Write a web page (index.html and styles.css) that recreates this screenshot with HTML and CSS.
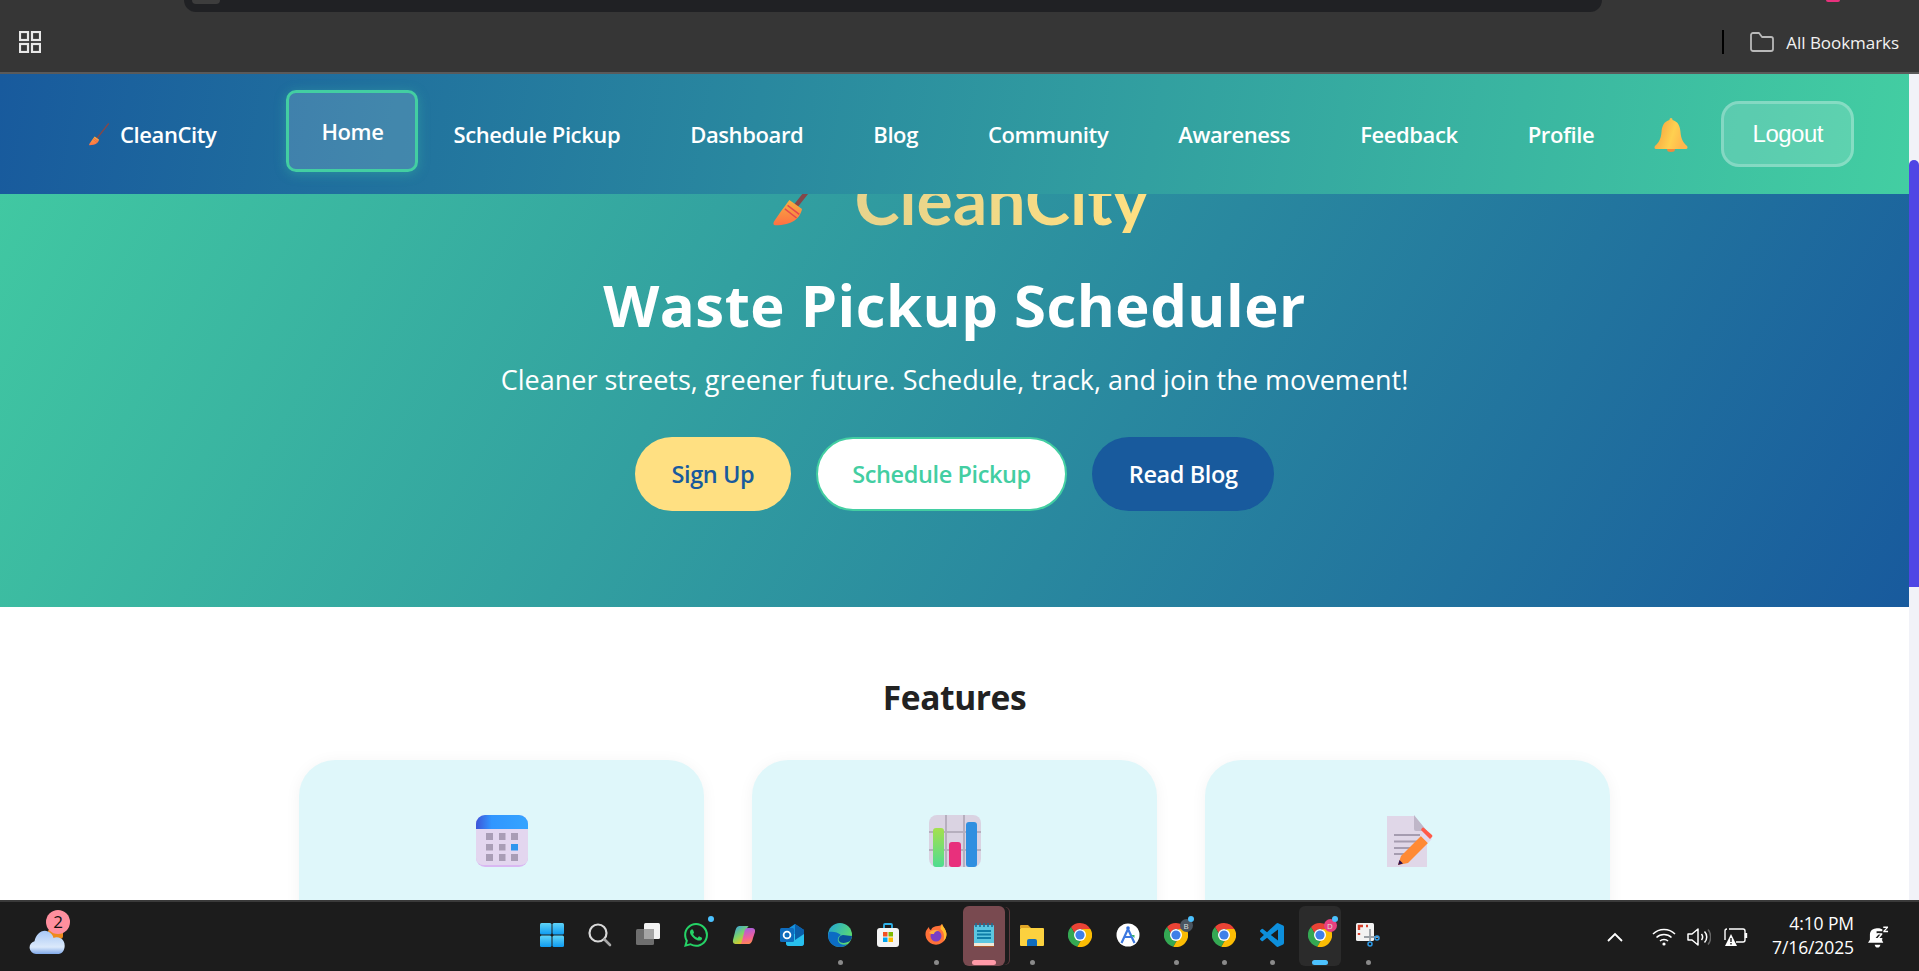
FILE: index.html
```html
<!DOCTYPE html>
<html lang="en">
  <head>
    <meta charset="UTF-8" />
    <meta name="viewport" content="width=device-width, initial-scale=1.0" />
    <title>CleanCity</title>
    <link rel="stylesheet" href="styles.css">
  </head>
  <body>
    <svg class="defs" width="0" height="0">
      <defs>
        <linearGradient id="bellFill" x1="0" y1="0" x2="1" y2="0.3">
          <stop offset="0" stop-color="#f59a3c" />
          <stop offset="0.65" stop-color="#ffd050" />
          <stop offset="1" stop-color="#ffb74d" />
        </linearGradient>
        <linearGradient id="broomHead" x1="0" y1="0" x2="0" y2="1">
          <stop offset="0" stop-color="#f5b041" />
          <stop offset="1" stop-color="#ff7043" />
        </linearGradient>
        <linearGradient id="winFill" x1="0" y1="0" x2="0" y2="1">
          <stop offset="0" stop-color="#5fd4f8" />
          <stop offset="1" stop-color="#0f9bf0" />
        </linearGradient>
        <symbol id="broom" viewBox="0 0 32 36">
          <path d="M31 1 L12 25" stroke="#84474a" stroke-width="2.500" stroke-linecap="round" />
          <path d="M9 21 L16 26 C15 31 11 35 1 35 C0 35 0 34 .5 33 C3 29 6 25 9 21 Z" fill="url(#broomHead)" />
          <path d="M8 24 L14.500 29M6.500 26 L13 31" stroke="#e5484d" stroke-width="0.800" />
        </symbol>
        <symbol id="chrome" viewBox="0 0 24 24">
          <path d="M12 0a12 12 0 0 1 10.400 6H12a6 6 0 0 0-5.600 3.800L3 3.900A12 12 0 0 1 12 0z" fill="#ea4335" />
          <path d="M3 3.900l5 8.700a6 6 0 0 0 4.600 5.400l-3.300 5.700A12 12 0 0 1 3 3.900z" fill="#34a853" />
          <path d="M22.400 6A12 12 0 0 1 9.300 23.700l5.200-9a6 6 0 0 0-.5-8.700z" fill="#fbbc04" />
          <circle cx="12" cy="12" r="6" fill="#fff" />
          <circle cx="12" cy="12" r="4.600" fill="#3f7fe8" />
        </symbol>
      </defs>
    </svg>

    <div class="browser-bar">
      <div class="omnibar"><span class="omnibar-dot"></span></div>
      <span class="profile-dot"></span>
      <div class="bookmarks-row">
        <svg class="apps-icon" viewBox="0 0 22 22" fill="none" stroke="#e8e8e8" stroke-width="2.200">
          <rect x="1" y="1" width="8" height="8" />
          <rect x="13" y="1" width="8" height="8" />
          <rect x="1" y="13" width="8" height="8" />
          <rect x="13" y="13" width="8" height="8" />
        </svg>
        <div class="all-bookmarks">
          <span class="bookmarks-divider"></span>
          <svg class="folder-icon" viewBox="0 0 24 20" fill="none" stroke="#b9b9b9" stroke-width="1.800">
            <path d="M1 3a2 2 0 0 1 2-2h6l3 4h9a2 2 0 0 1 2 2v10a2 2 0 0 1-2 2H3a2 2 0 0 1-2-2z" stroke-linejoin="round" />
          </svg>
          <span>All Bookmarks</span>
        </div>
      </div>
    </div>

    <div class="viewport">
      <div class="page-area">
        <nav class="navbar">
          <a class="brand">
            <svg class="brand-icon"><use href="#broom" /></svg>
            <span>CleanCity</span>
          </a>
          <a class="nav-link active">Home</a>
          <a class="nav-link">Schedule Pickup</a>
          <a class="nav-link">Dashboard</a>
          <a class="nav-link">Blog</a>
          <a class="nav-link">Community</a>
          <a class="nav-link">Awareness</a>
          <a class="nav-link">Feedback</a>
          <a class="nav-link">Profile</a>
          <svg class="bell-icon" viewBox="0 0 34 34">
            <ellipse cx="17" cy="31.500" rx="4" ry="2.500" fill="#f08a3c" />
            <path d="M17 0c1 0 1.500.8 1.500 2C24 3.500 26 8 26.500 14c.5 6 2 10 6.500 14 1 1.500.5 3-1 3H2c-1.500 0-2-1.500-1-3 4.500-4 6-8 6.500-14C8 8 10 3.500 15.500 2 15.500.8 16 0 17 0z" fill="url(#bellFill)" />
          </svg>
          <button class="logout-btn">Logout</button>
        </nav>

        <main class="page">
          <section class="hero">
            <div class="hero-logo">
              <svg class="hero-broom"><use href="#broom" /></svg>
              <span class="hero-logo-text">CleanCity</span>
            </div>
            <h1>Waste Pickup Scheduler</h1>
            <p class="hero-sub">Cleaner streets, greener future. Schedule, track, and join the movement!</p>
            <div class="hero-actions">
              <a class="btn btn-yellow">Sign Up</a>
              <a class="btn btn-white">Schedule Pickup</a>
              <a class="btn btn-blue">Read Blog</a>
            </div>
          </section>

          <section class="features">
            <h2>Features</h2>
            <div class="feature-grid">
              <div class="feature-card">
                <svg class="feature-icon" viewBox="0 0 52 52">
                  <defs>
                    <linearGradient id="calTop" x1="0" y1="0" x2="1" y2="0">
                      <stop offset="0" stop-color="#3d55d8" />
                      <stop offset="0.3" stop-color="#3196ff" />
                      <stop offset="1" stop-color="#35a4ff" />
                    </linearGradient>
                  </defs>
                  <rect width="52" height="52" rx="9" fill="#d9b8f2" />
                  <path d="M0 12h52v31a7 7 0 0 1-7 7H7a7 7 0 0 1-7-7z" fill="#e3d6ef" />
                  <path d="M0 14V9a9 9 0 0 1 9-9h34a9 9 0 0 1 9 9v5z" fill="url(#calTop)" />
                  <g fill="#a99db6">
                    <rect x="10" y="18" width="7" height="7" /><rect x="23" y="18" width="6.500" height="7" /><rect x="35" y="18" width="7" height="7" />
                    <rect x="10" y="29" width="7" height="6.500" /><rect x="23" y="29" width="6.500" height="6.500" />
                    <rect x="10" y="39" width="7" height="7" /><rect x="23" y="39" width="6.500" height="7" /><rect x="35" y="39" width="7" height="7" />
                  </g>
                  <rect x="35" y="29" width="7" height="6.500" fill="#2f96ee" />
                </svg>
              </div>
              <div class="feature-card">
                <svg class="feature-icon" viewBox="0 0 52 52">
                  <defs>
                    <linearGradient id="barGreen" x1="0" y1="0" x2="0" y2="1"><stop offset="0" stop-color="#a5e04e" /><stop offset="1" stop-color="#4fdc90" /></linearGradient>
                  </defs>
                  <rect width="52" height="52" rx="8" fill="#dad3e2" />
                  <path d="M0 17h52M0 35h52M17 0v52M35 0v52" stroke="#b6afbe" stroke-width="2" />
                  <rect x="4" y="13" width="11" height="39" rx="3" fill="url(#barGreen)" />
                  <rect x="20" y="27" width="12" height="25" rx="3" fill="#e8307c" />
                  <rect x="37" y="7" width="11" height="45" rx="3" fill="#2f8fe0" />
                </svg>
              </div>
              <div class="feature-card">
                <svg class="feature-icon" viewBox="-5 0 52 52">
                  <path d="M0 1h27l13 15v36H0z" fill="#e0d7e8" />
                  <path d="M27 0l13 16H29a2 2 0 0 1-2-2z" fill="#bfb6c8" />
                  <path d="M7 20h26M7 26.500h26M7 33h26M7 39h14" stroke="#a59cb0" stroke-width="2" />
                  <path d="M11 50l3-9 20-20 7 7-20 20z" fill="#ff8a35" />
                  <path d="M34 21l4-4 7 7-4 4z" fill="#e2d9ec" />
                  <path d="M35 13a1.500 1.500 0 0 1 2 0l8 7a1.500 1.500 0 0 1 0 2l-2 2-9-9z" fill="#ff5a48" />
                  <path d="M11 50l1.500-5 3.500 3.500z" fill="#2a1050" />
                </svg>
              </div>
            </div>
          </section>
        </main>
      </div>
      <div class="scrollbar"><div class="scrollbar-thumb"></div></div>
    </div>

    <footer class="taskbar">
      <div class="weather">
        <svg class="weather-icon" viewBox="0 0 38 28">
          <defs>
            <linearGradient id="cloudFill" x1="0" y1="0" x2="0" y2="1">
              <stop offset="0" stop-color="#a8c8f5" />
              <stop offset="0.7" stop-color="#dbe9fb" />
              <stop offset="1" stop-color="#7fa8e8" />
            </linearGradient>
          </defs>
          <rect x="19" y="2" width="15" height="10" rx="3" fill="#ee8a1c" />
          <path d="M7 27a6.500 6.500 0 0 1-1.500-12.800C7 7 13 2 19 4.500c3 1.300 5 4 5.500 6.500 3-1.500 8-.5 10 3 3 5.500 0 13-5 13z" fill="url(#cloudFill)" />
        </svg>
        <span class="weather-badge">2</span>
      </div>

      <div class="task-icons">
        <div class="task-item">
          <svg viewBox="0 0 24 24" fill="url(#winFill)">
            <rect x="0" y="0" width="11.500" height="11.500" rx="1.500" /><rect x="12.500" y="0" width="11.500" height="11.500" rx="1.500" />
            <rect x="0" y="12.500" width="11.500" height="11.500" rx="1.500" /><rect x="12.500" y="12.500" width="11.500" height="11.500" rx="1.500" />
          </svg>
        </div>
        <div class="task-item">
          <svg viewBox="0 0 24 24" fill="none" stroke-linecap="round">
            <circle cx="10" cy="10" r="8.500" stroke="#d8d8d8" stroke-width="2.200" />
            <path d="M16.500 16.500L22 22" stroke="#a8a8a8" stroke-width="2.600" />
          </svg>
        </div>
        <div class="task-item">
          <svg viewBox="0 0 24 24">
            <rect x="8" y="0" width="16" height="16" rx="1.500" fill="#f2f2f2" />
            <rect x="0" y="6" width="18" height="16" rx="1.500" fill="#6e6e6e" />
            <rect x="8" y="6" width="10" height="10" fill="#a5a5a5" />
          </svg>
        </div>
        <div class="task-item">
          <svg viewBox="0 0 24 24" fill="#25d366"><path d="M17.472 14.382c-.297-.149-1.758-.867-2.03-.967-.273-.099-.471-.148-.67.15-.197.297-.767.966-.94 1.164-.173.199-.347.223-.644.075-.297-.15-1.255-.463-2.39-1.475-.883-.788-1.48-1.761-1.653-2.059-.173-.297-.018-.458.13-.606.134-.133.298-.347.446-.52.149-.174.198-.298.298-.497.099-.198.05-.371-.025-.52-.075-.149-.669-1.612-.916-2.207-.242-.579-.487-.5-.669-.51-.173-.008-.371-.01-.57-.01-.198 0-.52.074-.792.372-.272.297-1.04 1.016-1.04 2.479 0 1.462 1.065 2.875 1.213 3.074.149.198 2.096 3.2 5.077 4.487.709.306 1.262.489 1.694.625.712.227 1.36.195 1.871.118.571-.085 1.758-.719 2.006-1.413.248-.694.248-1.289.173-1.413-.074-.124-.272-.198-.57-.347m-5.421 7.403h-.004a9.87 9.87 0 01-5.031-1.378l-.361-.214-3.741.982.998-3.648-.235-.374a9.86 9.86 0 01-1.51-5.26c.001-5.45 4.436-9.884 9.888-9.884 2.64 0 5.122 1.03 6.988 2.898a9.825 9.825 0 012.893 6.994c-.003 5.45-4.437 9.884-9.885 9.884m8.413-18.297A11.815 11.815 0 0012.05 0C5.495 0 .16 5.335.157 11.892c0 2.096.547 4.142 1.588 5.945L.057 24l6.305-1.654a11.882 11.882 0 005.683 1.448h.005c6.554 0 11.89-5.335 11.893-11.893a11.821 11.821 0 00-3.48-8.413z" /></svg>
          <span class="task-badge"></span>
        </div>
        <div class="task-item">
          <svg viewBox="0 0 24 24">
            <defs>
              <linearGradient id="copA" x1="0" y1="0" x2="0.6" y2="1"><stop offset="0" stop-color="#2f9be8" /><stop offset="0.55" stop-color="#7dd36a" /><stop offset="1" stop-color="#f5c518" /></linearGradient>
              <linearGradient id="copB" x1="0.4" y1="0" x2="0.6" y2="1"><stop offset="0" stop-color="#a65fe0" /><stop offset="0.6" stop-color="#f0609a" /><stop offset="1" stop-color="#ff8a50" /></linearGradient>
            </defs>
            <path d="M8 3c-3 0-4 2-5 6l-2 8c-.5 3 1 4 3 4h5c2 0 3-1 3.500-3L15 6c.5-2 1-3 2-3z" fill="url(#copA)" />
            <path d="M16 21c3 0 4-2 5-6l2-6c.5-3-1-4-3-4h-4c-2 0-3 1-3.500 3L10 18c-.5 2-1 3-2 3z" fill="url(#copB)" />
          </svg>
        </div>
        <div class="task-item">
          <svg viewBox="0 0 24 24">
            <path d="M6 7l9-6 9 6v13a3 3 0 0 1-3 3H9a3 3 0 0 1-3-3z" fill="#1490df" />
            <path d="M6 11h18v9a3 3 0 0 1-3 3H9a3 3 0 0 1-3-3z" fill="#28c0ee" />
            <path d="M15 1l9 6v4l-9 6z" fill="#0a5da8" />
            <rect x="0" y="5" width="14" height="14" rx="1.500" fill="#0f6cbd" />
            <circle cx="7" cy="12" r="3.400" fill="none" stroke="#fff" stroke-width="1.800" />
          </svg>
        </div>
        <div class="task-item has-dot">
          <svg viewBox="0 0 24 24">
            <defs>
              <linearGradient id="edgeA" x1="0" y1="0" x2="1" y2="0.6"><stop offset="0" stop-color="#1fa4d8" /><stop offset="1" stop-color="#5fdc6c" /></linearGradient>
            </defs>
            <circle cx="12" cy="12" r="12" fill="url(#edgeA)" />
            <path d="M1 9c-3 8 3 15 11 15 3 0 6-1 8-3-4 1.500-9 .5-10-3-.8-3 1-5 3-6-3-3-9-4-12-3z" fill="#0c6cc4" />
            <path d="M11 18c-1-3 1-5.500 4-6 3 0 5 1 9 1 0 1-1 4-2 5-3 2-9 3-11 0z" fill="#0a4f9a" />
          </svg>
          <span class="task-dot"></span>
        </div>
        <div class="task-item">
          <svg viewBox="0 0 24 24">
            <path d="M8 6V2a1 1 0 0 1 1-1h6a1 1 0 0 1 1 1v4" fill="none" stroke="#2fb3ea" stroke-width="1.800" />
            <rect x="1" y="5" width="22" height="19" rx="3" fill="#f4f4f4" />
            <rect x="7" y="9" width="4.500" height="4.500" fill="#f25022" /><rect x="12.500" y="9" width="4.500" height="4.500" fill="#7fba00" />
            <rect x="7" y="14.500" width="4.500" height="4.500" fill="#00a4ef" /><rect x="12.500" y="14.500" width="4.500" height="4.500" fill="#ffb900" />
          </svg>
        </div>
        <div class="task-item has-dot">
          <svg viewBox="0 0 24 24">
            <path d="M18 1c1 3 4 5 4.500 10A10.500 10.500 0 1 1 2 8c1-2 2-3 3-4 0 2 1 3 2 3 1-3 4-4 7-4 2 0 3-1 4-2z" fill="#ff7139" />
            <path d="M18 1c1 3 4 5 4.500 10 0 3-1 5-3 7 1-4 1-9-3-12 0-2 1-4 1.500-5z" fill="#ffbd2e" />
            <circle cx="12" cy="13" r="5.500" fill="#7b3fc4" />
            <path d="M5 10c2-3 7-4 10-2-3-.5-5 1-5 3-2 0-3 0-5-1z" fill="#ffb040" />
          </svg>
          <span class="task-dot"></span>
        </div>
        <div class="task-item notepad-item">
          <span class="notepad-bg"></span>
          <svg viewBox="0 0 24 24">
            <rect x="2" y="2" width="20" height="21" rx="1" fill="#5cc6e0" />
            <path d="M2 20h20v3H2z" fill="#f0e8d8" />
            <path d="M2 23h20v1H2z" fill="#a8552a" />
            <path d="M5 8h14M5 11.500h14M5 15h14" stroke="#0f7ea8" stroke-width="1.800" />
            <path d="M4 0v4M8 0v4M12 0v4M16 0v4M20 0v4" stroke="#1c6f96" stroke-width="1.600" />
          </svg>
          <span class="task-bar bar-pink"></span>
        </div>
        <div class="task-item has-dot">
          <svg viewBox="0 0 24 24">
            <path d="M0 3a1 1 0 0 1 1-1h7l3 3h-11z" fill="#e0a526" />
            <rect x="0" y="5" width="24" height="18" rx="1" fill="#fbd13f" />
            <path d="M7 23v-5a2 2 0 0 1 2-2h6a2 2 0 0 1 2 2v5z" fill="#0f6cbd" />
          </svg>
          <span class="task-dot"></span>
        </div>
        <div class="task-item">
          <svg viewBox="0 0 24 24"><use href="#chrome" /></svg>
        </div>
        <div class="task-item">
          <svg viewBox="0 0 24 24">
            <circle cx="12" cy="12" r="11.500" fill="#fff" />
            <circle cx="12" cy="5" r="1.800" fill="#2f6fdc" />
            <path d="M12 6L5.500 20M12 6l6.500 14M7.500 14h9" stroke="#3c78e0" stroke-width="2.200" fill="none" />
            <path d="M15 12l3.500 0 0 3z" fill="#3ab36a" />
          </svg>
        </div>
        <div class="task-item has-dot">
          <svg viewBox="0 0 24 24"><use href="#chrome" /></svg>
          <span class="chrome-avatar grey">B</span>
          <span class="task-badge"></span>
          <span class="task-dot"></span>
        </div>
        <div class="task-item has-dot">
          <svg viewBox="0 0 24 24"><use href="#chrome" /></svg>
          <span class="task-dot"></span>
        </div>
        <div class="task-item has-dot">
          <svg viewBox="0 0 24 24" fill="#0d8fdc"><path d="M23.15 2.587L18.21.21a1.494 1.494 0 0 0-1.705.29l-9.46 8.63-4.12-3.128a.999.999 0 0 0-1.276.057L.327 7.261A1 1 0 0 0 .326 8.74L3.899 12 .326 15.26a1 1 0 0 0 .001 1.479L1.65 17.94a.999.999 0 0 0 1.276.057l4.12-3.128 9.46 8.63a1.492 1.492 0 0 0 1.704.29l4.942-2.377A1.5 1.5 0 0 0 24 20.06V3.939a1.5 1.5 0 0 0-.85-1.352zm-5.146 14.861L10.826 12l7.178-5.448v10.896z" /></svg>
          <span class="task-dot"></span>
        </div>
        <div class="task-item active-item">
          <svg viewBox="0 0 24 24"><use href="#chrome" /></svg>
          <span class="chrome-avatar pink">D</span>
          <span class="task-badge"></span>
          <span class="task-bar bar-blue"></span>
        </div>
        <div class="task-item has-dot">
          <svg viewBox="0 0 24 24">
            <rect x="0" y="0" width="18" height="18" rx="1.500" fill="#f2f2f2" />
            <path d="M3 7V3h4M10 3h2M3 10v2" stroke="#d8402c" stroke-width="2.400" fill="none" />
            <path d="M14 6v12M8 14h14" stroke="#9aa0a6" stroke-width="1.800" />
            <circle cx="14" cy="21" r="2" fill="none" stroke="#2f9be8" stroke-width="1.500" />
            <circle cx="21" cy="15" r="2" fill="none" stroke="#2f9be8" stroke-width="1.500" />
          </svg>
          <span class="task-dot"></span>
        </div>
      </div>

      <div class="tray">
        <svg class="tray-chevron" viewBox="0 0 16 10" fill="none" stroke="#fff" stroke-width="1.800"><path d="M1 9l7-7 7 7" /></svg>
        <svg class="tray-wifi" viewBox="0 0 24 18" fill="none" stroke="#fff" stroke-width="1.500">
          <path d="M1 6c6-6 16-6 22 0M4.500 9.500c4-4 11-4 15 0M8 13c2-2 6-2 8 0" />
          <circle cx="12" cy="16" r="1.600" fill="#fff" stroke="none" />
        </svg>
        <svg class="tray-volume" viewBox="0 0 24 18" fill="none" stroke="#fff" stroke-width="1.500">
          <path d="M1 6h4l6-5v16l-6-5H1z" stroke-linejoin="round" />
          <path d="M14.500 6c1.500 2 1.500 4 0 6M17.500 3.500c3 3 3 8 0 11" />
          <path d="M21 1.500c3.500 4 3.500 11 0 15" stroke="#666" />
        </svg>
        <svg class="tray-battery" viewBox="0 0 24 20" fill="none" stroke="#fff" stroke-width="1.400">
          <path d="M5 2h14a2 2 0 0 1 2 2v9a2 2 0 0 1-2 2H12" />
          <path d="M1 13V4a2 2 0 0 1 2-2" />
          <path d="M22 6v5" stroke-width="2.400" />
          <path d="M7 7L1 19h12z" fill="#fff" stroke="none" />
          <path d="M7 11v4M7 16v1.500" stroke="#1c1c1c" stroke-width="1.400" />
        </svg>
        <div class="clock">
          <span>4:10 PM</span>
          <span>7/16/2025</span>
        </div>
        <svg class="tray-bell" viewBox="0 0 22 24" fill="#fff">
          <path d="M8 3c-4 .5-6 3-6 7v5l-2 3h16l-1.500-3v-2H8l4-5H9V6h6V4c-2-1-4-1.500-7-1z" />
          <path d="M7 20h6c-.5 2-1.500 3-3 3s-2.500-1-3-3z" />
          <path d="M10 8h5v1.400l-3 3.600h3v1.500H10v-1.500l3-3.600h-3zM16 1h5v1.300l-3 3.200h3V7h-5V5.700l3-3.200h-3z" />
        </svg>
      </div>
    </footer>
  </body>
</html>
```

FILE: styles.css
```css
html {
  font-family: "Open Sans", "Noto Sans", sans-serif;
}

body {
  margin: 0;
  height: 100vh;
  overflow: hidden;
  display: flex;
  flex-direction: column;
  background: #fff;
}

a {
  color: inherit;
  text-decoration: none;
}

.defs {
  position: absolute;
}

/* browser chrome */
.browser-bar {
  height: 72px;
  flex-shrink: 0;
  position: relative;
  background: #363636;
  border-bottom: 2px solid #5a5a5a;
}

.omnibar {
  height: 12px;
  margin: 0 317px 0 184px;
  background: #202124;
  border-radius: 0 0 20px 20px;
  padding-left: 8px;
}

.omnibar-dot {
  display: block;
  width: 28px;
  height: 4px;
  background: #3d3d3d;
  border-radius: 0 0 14px 14px;
}

.profile-dot {
  position: absolute;
  top: 0;
  left: 1826px;
  width: 14px;
  height: 2px;
  background: #e8317d;
  border-radius: 0 0 8px 8px;
}

.bookmarks-row {
  height: 60px;
  display: flex;
  align-items: center;
  justify-content: space-between;
  padding: 0 20px 0 19px;
}

.apps-icon {
  width: 22px;
  height: 22px;
}

.all-bookmarks {
  display: flex;
  align-items: center;
  color: #f2f2f2;
  font-size: 17px;
  letter-spacing: -0.05px;
}

.bookmarks-divider {
  width: 2px;
  height: 24px;
  background: #000;
  margin-right: 26px;
}

.folder-icon {
  width: 24px;
  height: 20px;
  margin-right: 12px;
}

/* page */
.viewport {
  height: 826px;
  flex-shrink: 0;
  display: flex;
  overflow: hidden;
}

.page-area {
  flex: 1;
  position: relative;
  overflow: hidden;
}

.scrollbar {
  width: 10px;
  background: #f1f2f8;
}

.scrollbar-thumb {
  margin-top: 86px;
  height: 427px;
  background: #4f46e5;
  border-radius: 5px 5px 0 0;
}

.navbar {
  position: absolute;
  top: 0;
  left: 0;
  right: 0;
  z-index: 10;
  height: 120px;
  box-sizing: border-box;
  padding: 2px 0 0 89px;
  display: flex;
  align-items: center;
  background: linear-gradient(100deg, #185a9d, #43cea2);
  color: #fff;
  font-weight: 600;
  font-size: 22px;
  letter-spacing: -0.4px;
}

.brand {
  display: flex;
  align-items: center;
  gap: 11px;
  margin-right: 70px;
  padding-bottom: 2px;
}

.brand-icon {
  width: 20px;
  height: 23px;
}

.nav-link {
  padding: 0 32px 2px;
  border: 3px solid transparent;
}

.nav-link.active {
  display: flex;
  align-items: center;
  height: 76px;
  padding: 0 32px;
  transform: translateY(-4px);
  border-color: #43cea2;
  border-radius: 10px;
  background: rgba(255, 255, 255, 0.15);
  box-shadow: 0 2px 12px rgba(67, 206, 162, 0.35);
}

.bell-icon {
  width: 34px;
  height: 34px;
  margin: 0 33px 0 25px;
}

.logout-btn {
  width: 133px;
  height: 66px;
  margin-top: -2px;
  border: 3px solid rgba(255, 255, 255, 0.25);
  border-radius: 18px;
  background: rgba(255, 255, 255, 0.15);
  color: #fff;
  font-family: "Liberation Sans", sans-serif;
  font-size: 24px;
  letter-spacing: -0.5px;
}

.page {
  margin-top: -80px;
}

.hero {
  height: 613px;
  box-sizing: border-box;
  overflow: hidden;
  padding-top: 138px;
  text-align: center;
  color: #fff;
  background: linear-gradient(120deg, #43cea2, #185a9d);
}

.hero-logo {
  height: 101px;
  padding-left: 12px;
  display: flex;
  justify-content: center;
  align-items: flex-end;
  gap: 24px;
}

.hero-broom {
  width: 58px;
  height: 65px;
  margin-bottom: 6px;
}

.hero-logo-text {
  font-family: "Lato", sans-serif;
  font-size: 68px;
  font-weight: 700;
  line-height: 1;
  background: linear-gradient(90deg, #e6d38c, #ffe082);
  -webkit-background-clip: text;
  background-clip: text;
  color: transparent;
}

.hero h1 {
  margin: 34px 0 0;
  font-size: 58px;
  font-weight: 700;
  line-height: 76px;
  letter-spacing: 0.5px;
}

.hero-sub {
  margin: 19px 0 0;
  font-size: 27px;
  line-height: 36px;
}

.hero-actions {
  margin-top: 39px;
  display: flex;
  justify-content: center;
  gap: 25px;
}

.btn {
  height: 74px;
  box-sizing: border-box;
  display: flex;
  align-items: center;
  padding: 0 36.5px;
  border-radius: 37px;
  font-size: 23.5px;
  font-weight: 600;
  letter-spacing: -0.4px;
}

.btn-yellow {
  background: #ffe082;
  color: #185a9d;
}

.btn-white {
  padding: 0 34.5px;
  background: #fff;
  color: #43cea2;
  border: 2px solid #43cea2;
}

.btn-blue {
  background: #185a9d;
  color: #fff;
}

.features {
  padding-top: 69px;
}

.features h2 {
  margin: 0;
  text-align: center;
  font-size: 33.5px;
  line-height: 42px;
  font-weight: 700;
  color: #222;
  letter-spacing: -0.4px;
}

.feature-grid {
  margin: 42px auto 0;
  width: 1311px;
  display: grid;
  grid-template-columns: repeat(3, 1fr);
  gap: 48px;
}

.feature-card {
  height: 260px;
  padding-top: 55px;
  box-sizing: border-box;
  text-align: center;
  background: #dff7fa;
  border-radius: 36px;
  box-shadow: 0 2px 16px rgba(0, 0, 0, 0.05);
}

.feature-icon {
  height: 52px;
  width: 52px;
}

/* windows taskbar */
.taskbar {
  height: 71px;
  flex-shrink: 0;
  box-sizing: border-box;
  border-top: 2px solid #3a3a3a;
  background: #1c1c1c;
  display: grid;
  grid-template-columns: 1fr auto 1fr;
  align-items: center;
  color: #fff;
}

.weather {
  position: relative;
  width: 100px;
  height: 69px;
}

.weather-icon {
  position: absolute;
  left: 29px;
  top: 25px;
  width: 38px;
  height: 28px;
}

.weather-badge {
  position: absolute;
  left: 46px;
  top: 8px;
  width: 24px;
  height: 24px;
  border-radius: 50%;
  background: #ff8f9e;
  color: #111;
  font-size: 17px;
  line-height: 24px;
  text-align: center;
}

.task-icons {
  display: flex;
}

.task-item {
  position: relative;
  width: 48px;
  height: 69px;
  display: flex;
  align-items: center;
  justify-content: center;
}

.task-item > svg {
  position: relative;
  width: 24px;
  height: 24px;
  margin-bottom: 3px;
}

.task-badge {
  position: absolute;
  top: 14px;
  right: 6px;
  width: 6px;
  height: 6px;
  border-radius: 50%;
  background: #4cc2ff;
}

.task-dot {
  position: absolute;
  bottom: 6px;
  left: 22px;
  width: 5px;
  height: 5px;
  border-radius: 50%;
  background: #8a8a8a;
}

.task-bar {
  position: absolute;
  bottom: 6px;
  height: 5px;
  border-radius: 3px;
}

.bar-pink {
  left: 12px;
  width: 24px;
  background: #ff9aa8;
}

.bar-blue {
  left: 16px;
  width: 16px;
  background: #4cc2ff;
}

.notepad-bg {
  position: absolute;
  top: 4px;
  left: 3px;
  width: 42px;
  height: 60px;
  border-radius: 6px;
  background: #794a50;
  box-shadow: 5px 0 0 -1px #1c1c1c, 6px 0 0 -1px #5a3a3e;
}

.active-item::before {
  content: "";
  position: absolute;
  top: 4px;
  left: 3px;
  width: 42px;
  height: 60px;
  border-radius: 6px;
  background: #2b2b2b;
}

.chrome-avatar {
  position: absolute;
  top: 17px;
  left: 28px;
  width: 13px;
  height: 13px;
  border-radius: 50%;
  color: #ddd;
  font-size: 8px;
  line-height: 13px;
  text-align: center;
}

.chrome-avatar.grey {
  background: #4a5560;
}

.chrome-avatar.pink {
  background: #e8407f;
}

.tray {
  display: flex;
  align-items: center;
  justify-content: flex-end;
  height: 69px;
}

.tray-chevron {
  width: 16px;
  height: 10px;
  margin-right: 29px;
}

.tray-wifi {
  width: 24px;
  height: 18px;
  margin-right: 11px;
}

.tray-volume {
  width: 24px;
  height: 18px;
  margin-right: 13px;
}

.tray-battery {
  width: 24px;
  height: 20px;
  margin-right: 24px;
}

.clock {
  display: flex;
  flex-direction: column;
  align-items: flex-end;
  gap: 3px;
  margin: 0 14px 3px 0;
  font-size: 17.5px;
  line-height: 21px;
  letter-spacing: -0.1px;
}

.tray-bell {
  width: 21px;
  height: 24px;
  margin-right: 30px;
}
```
